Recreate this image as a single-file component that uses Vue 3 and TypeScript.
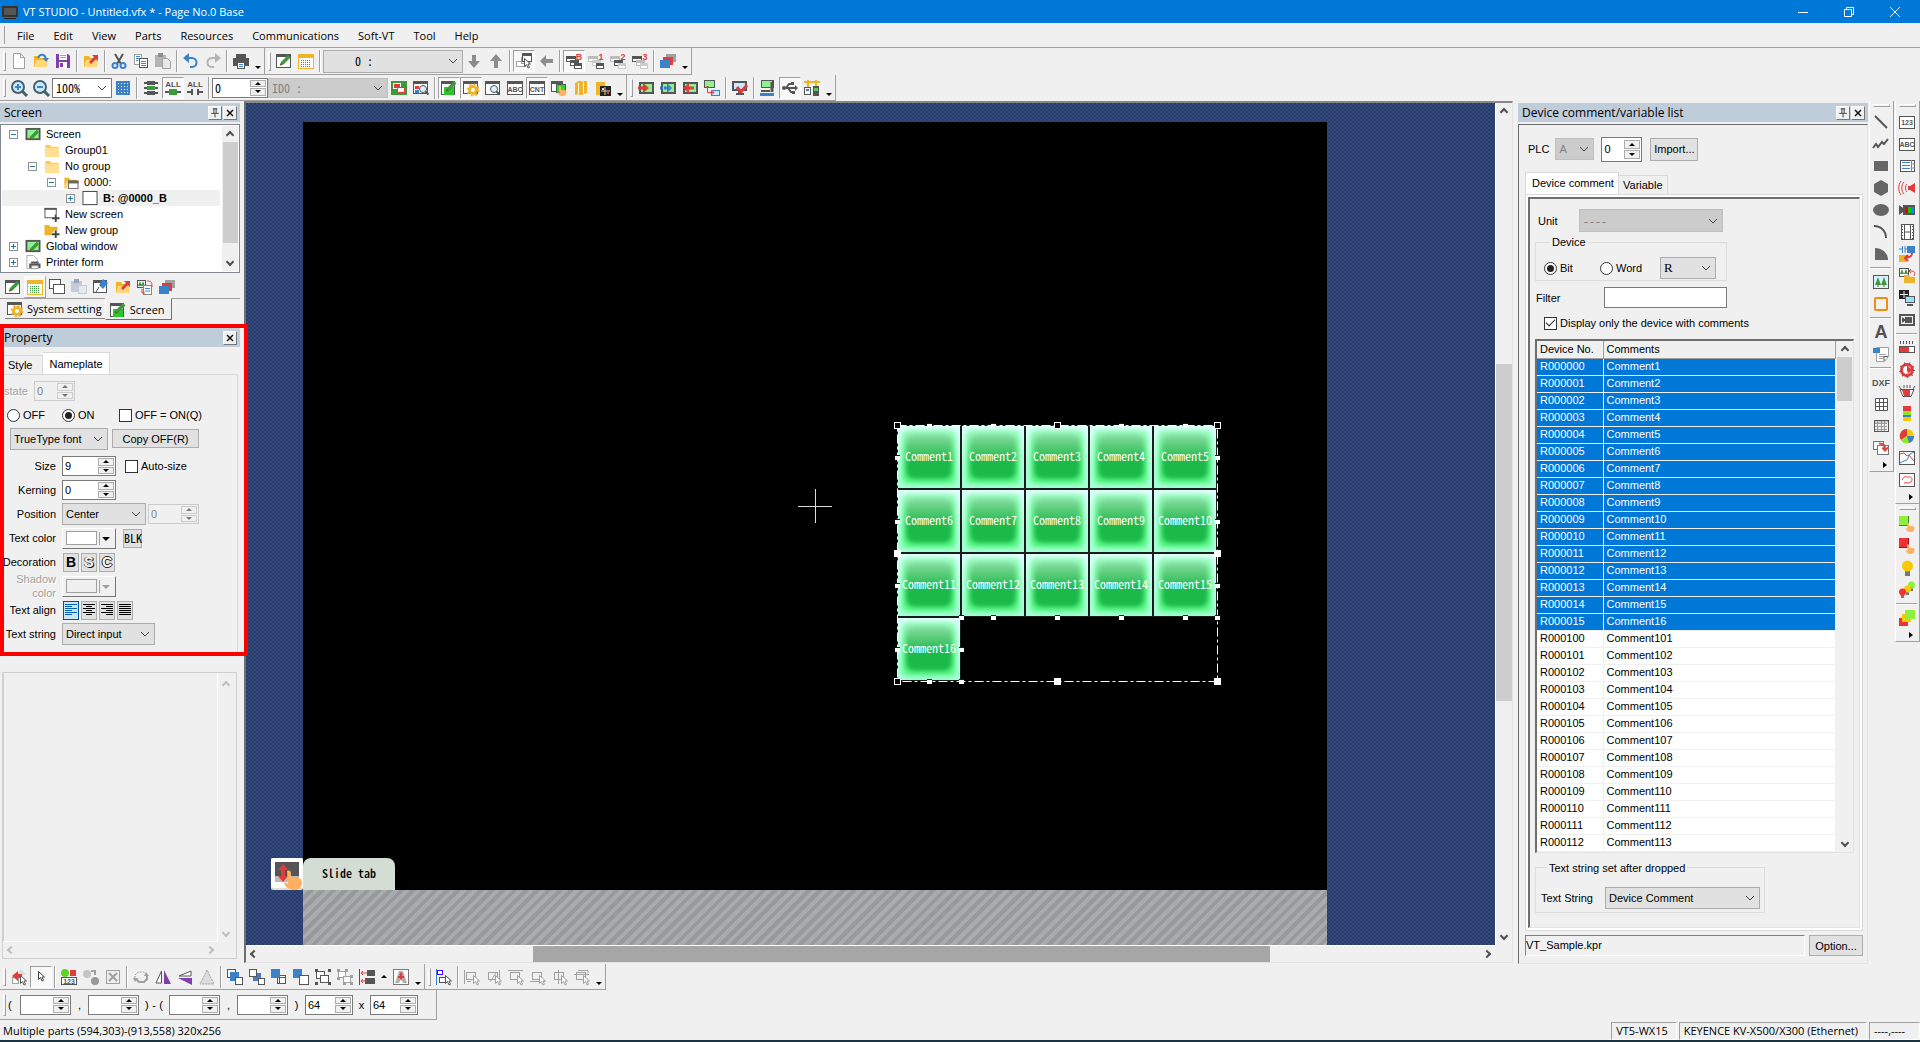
<script setup lang="ts">
import { h, ref } from 'vue'

const K = '#555'
const L = '#a0a0a0'
const R = '#e03c3c'
const B = '#3c82c8'
const G = '#3c9a3c'
const Y = '#f0b428'
const box = (x: number, y: number, w: number, ht: number, s = K, f = '#fff') =>
  `<rect x="${x + 0.5}" y="${y + 0.5}" width="${w - 1}" height="${ht - 1}" fill="${f}" stroke="${s}"/>`
const fill = (x: number, y: number, w: number, ht: number, f: string) =>
  `<rect x="${x}" y="${y}" width="${w}" height="${ht}" fill="${f}"/>`
const line = (d: string, s = K, w = 1, f = 'none') => `<path d="${d}" fill="${f}" stroke="${s}" stroke-width="${w}"/>`
const shape = (d: string, f = K) => `<path d="${d}" fill="${f}"/>`
const label = (t: string, x: number, y: number, size: number, f = K) =>
  `<text x="${x}" y="${y}" font-size="${size}" font-weight="700" fill="${f}" text-anchor="middle" font-family="Liberation Sans, sans-serif">${t}</text>`
const win = (x: number, y: number, w: number, ht: number, s = K) => box(x, y, w, ht, s) + fill(x, y, w, 3, s)
const pencil = (x: number, y: number) =>
  `<g transform="translate(${x} ${y})">${shape('M8 0l2.500 2.500-7 7-3.500 1 1-3.500z', G)}${shape('M0 10.500l.8-2.500 1.700 1.700z', '#6b4a2a')}</g>`
const folder = (f = Y, g = '#ffd77a') => shape('M1 3h5l1 2h7v9H1z', f) + shape('M3 7h12l-1 7H1z', g)
const pointer = (x: number, y: number, s = K) =>
  `<g transform="translate(${x} ${y})">${line('M.5.5v8l2-2 1.500 3.500 1.500-.7L4 6h2.500z', s, 1, '#fff')}</g>`
const finger = (f = '#ffb060') => shape('M8 6.500c1.500-.6 2 .2 2 1.500v2h3c2 0 2.500 1 2.500 2.500 0 2-1.500 3.500-4 3.500-3 0-4.500-2-5-3.500.8-.6 1.500 0 2 .6z', f)
const redArrow = (tail = R) => shape('M6 9l5-5-2-2h6v6l-2-2-5 5z', tail)
const glass = (x: number, y: number) =>
  `<g transform="translate(${x} ${y})"><circle cx="4" cy="4" r="3.500" fill="#d8f0ff" stroke="${K}"/>${line('M6.500 6.500l3 3', K, 2)}</g>`
const zoomGlass = `<circle cx="7" cy="7" r="6" fill="#c8ecff" stroke="#46606e" stroke-width="2"/>` + line('M11 11l5 5', '#46606e', 3)
const cascade = (a: string, b: string, c: string, t: string) =>
  win(0, 3, 10, 6, a) + win(4, 7, 9, 6, b) + win(8, 10, 8, 6, c) + label(t, 13, 7, 9, R)
const layers = fill(6, 1, 10, 8, L) + fill(3, 4, 10, 8, R) + fill(0, 7, 10, 8, B)
const alignIcon = (d: string) => box(2, 3, 10, 8, L, 'none') + line(d, L) + pointer(9, 6, L)
const abc = (t: string) => box(0, 2, 16, 13, K) + label(t, 8, 11, 7)
const lamp = (x: number, y: number, f: string) => fill(x - 1, y + 2, 3, 4, '#777') + `<circle cx="${x + 0.5}" cy="${y}" r="3.500" fill="${f}"/>`
const screenDevice = fill(1, 2, 15, 12, K) + fill(3, 4, 11, 8, '#8ef08e')

const icons: Record<string, string> = {
  'New': line('M2.500.5h7l4 4v11h-11z', L, 1, '#fff') + line('M9.500.5v4h4', L),
  'Open': folder() + line('M5 5c2-5 7-4 8 1', B, 2) + shape('M10 5h6l-3 4z', B),
  'Save': shape('M1 1h12l2 2v12H1z', '#8040a8') + fill(4, 1, 8, 6, '#fff') + fill(5, 2, 6, 1, L) + fill(5, 4, 6, 1, L) + fill(4, 9, 8, 6, '#fff') + fill(5, 10, 3, 4, '#8040a8'),
  'Reference': folder() + redArrow(),
  'Cut': line('M4 1l6 10M12 1L6 11', K, 2) + `<circle cx="4" cy="12.500" r="2.500" fill="none" stroke="${B}" stroke-width="2"/><circle cx="12" cy="12.500" r="2.500" fill="none" stroke="${B}" stroke-width="2"/>`,
  'Copy': box(1, 1, 8, 11, L) + line('M3 3.500h4M3 5.500h4M3 7.500h2', B) + box(6, 5, 9, 10, K) + line('M8 8.500h5M8 10.500h5M8 12.500h5', B),
  'Paste': fill(0, 2, 11, 12, '#b4b4b4') + fill(3, 0, 5, 4, '#909090') + line('M7.500 5.500h5l3 3v7h-8z', L, 1, '#e8e8e8'),
  'Undo': line('M2 5h7c6 0 6 9 0 9H7', B, 2) + shape('M6 0v10L0 5z', B),
  'Redo': line('M14 5H7c-6 0-6 9 0 9h2', '#b4b4b4', 2) + shape('M10 0v10l6-5z', '#b4b4b4'),
  'Print': fill(3, 1, 10, 4, K) + fill(0, 5, 16, 8, K) + box(4, 9, 8, 7, K) + line('M6 11.500h4M6 13.500h4', B),
  'Edit screen': win(0, 1, 15, 14) + pencil(4, 2),
  'Screen list': box(0, 1, 16, 15, Y) + fill(0, 1, 16, 4, Y) + line('M3 7.500h10M3 9.500h10M3 11.500h10M3 13.500h10', G, 1).replace('/>', ' stroke-dasharray="1 1"/>'),
  'Next page': shape('M6 2h4v6h4l-6 7-6-7h4z', '#8c8c8c'),
  'Previous page': shape('M6 15h4V8h4L8 1 2 8h4z', '#8c8c8c'),
  'Select layer': box(0, 8, 10, 6, L) + box(5, 4, 9, 7, L) + win(6, 0, 10, 9, K) + pointer(8, 5),
  'Back': shape('M15 6v4H8v4L2 8l6-6v4z', '#8c8c8c'),
  'Base B': cascade(K, K, K, 'B'),
  'Window 1': cascade('#bbb', '#ccc', K, '1'),
  'Window 2': cascade('#bbb', K, '#ccc', '2'),
  'Window 3': cascade(K, '#bbb', '#ccc', '3'),
  'Layers': layers,
  'Zoom in': zoomGlass + line('M4 7h6M7 4v6', B, 2),
  'Zoom out': zoomGlass + line('M4 7h6', B, 2),
  'Grid': fill(1, 1, 14, 14, B) + line('M3 3.500h12M3 6.500h12M3 9.500h12M3 12.500h12', '#fff').replace('/>', ' stroke-dasharray="1 2"/>'),
  'Parts on': [1, 6, 11].map((y) => fill(1, y + 1, 14, 2, K) + fill(4, y, 8, 4, y === 6 ? G : K)).join(''),
  'All on': label('ALL', 8, 7, 8) + fill(0, 11, 16, 2, K) + fill(4, 9, 8, 6, G),
  'All off': label('ALL', 8, 7, 8) + fill(0, 11, 16, 2, K) + fill(4, 9, 8, 6, '#f0f0f0') + fill(4, 9, 2, 6, K) + fill(10, 9, 2, 6, K),
  'Color': fill(0, 1, 16, 14, G) + box(2, 3, 8, 6, '#fff', R) + box(6, 7, 8, 6, R, '#fff'),
  'Find': win(0, 1, 15, 13) + fill(2, 6, 4, 3, R) + fill(2, 10, 4, 3, B) + glass(6, 5),
  'Edit mode': win(0, 1, 14, 14) + fill(3, 7, 10, 8, '#28c828') + pencil(5, 1),
  'System setting': win(0, 1, 15, 13) + `<circle cx="10" cy="10" r="3.500" fill="#fff" stroke="${Y}" stroke-width="3"/><circle cx="10" cy="10" r="5.500" fill="none" stroke="${Y}" stroke-width="2" stroke-dasharray="2 2.300"/>`,
  'Preview': win(0, 1, 15, 14) + glass(5, 5),
  'ABC display': win(0, 1, 16, 14) + label('ABC', 8, 12, 7),
  'CNT display': win(0, 1, 16, 14) + label('CNT', 8, 12, 7),
  'Touch switch': win(0, 1, 12, 11) + box(5, 4, 10, 9, K, '#28d828') + finger(),
  'Library': shape('M2 3l4-2h3v13H6l-4 1z', Y) + shape('M6 3l5-2h3v12l-5 2H6z', Y) + line('M5.500 3v11M10.500 2v12', '#fff8e0'),
  'Parts library': shape('M1 2h9v13H1z', Y) + fill(5, 6, 11, 10, '#222') + line('M6 11h9M10 7v8', '#e8c8b0') + fill(7, 8, 2, 2, '#ddd') + fill(12, 12, 2, 2, R),
  'Transfer': screenDevice + shape('M0 6.500h5V3l6 5-6 5V9.500H0z', R),
  'Receive': screenDevice + shape('M4 6.500h3V3l5 5-5 5V9.500H4z', B) + line('M0 8h4', B, 3).replace('/>', ' stroke-dasharray="1 1"/>'),
  'Send back': screenDevice + shape('M12 6.500H7V3L1 8l6 5V9.500h5z', R),
  'Compare': fill(0, 0, 11, 8, K) + fill(1, 1, 9, 6, '#8ef08e') + fill(7, 10, 9, 6, B) + fill(8, 11, 7, 4, '#c8ecff') + line('M3.500 6v6.500h6M1.500 8l2-2 2 2M8 10.500l2 2-2 2', R),
  'Monitor check': fill(0, 1, 15, 10, K) + fill(2, 3, 11, 6, '#c8ecff') + fill(4, 13, 8, 2, K) + fill(6, 11, 4, 2, K) + line('M5 7l4 5 6-7', R, 3),
  'Unit setting': fill(1, 0, 13, 8, K) + fill(2, 1, 10, 6, '#8ef08e') + line('M12 2v10', K, 3) + fill(1, 10, 9, 2, K) + fill(0, 13, 14, 3, B),
  'USB': line('M1 8h13M4 8l3-4h3M6 8l3 4h2', K, 2) + `<circle cx="2" cy="8" r="2" fill="${K}"/>` + shape('M13 5l3 3-3 3z') + fill(9, 2, 3, 3, K) + fill(10, 11, 3, 3, K),
  'Network': line('M0 2h16M4 0v7M12 0v7', Y, 2) + box(0, 7, 7, 8) + fill(2, 9, 3, 2, B) + fill(9, 6, 6, 10, K) + fill(10, 8, 4, 3, '#5c5'),
  'Select by shape': shape('M10 0l5 6H6z', '#ddd') + box(1, 8, 7, 7, L) + shape('M1 7l6-5v3h4v4H7v3z', R) + pointer(9, 6),
  'Select': pointer(5, 2, '#444'),
  'Replace parts': `<circle cx="4" cy="4" r="4" fill="#5fd428"/>` + fill(9, 1, 6, 6, R) + box(0, 8, 16, 8, K) + label('123', 8, 15, 7),
  'Swap': `<circle cx="4" cy="5" r="4" fill="#c4c4c4"/><circle cx="12" cy="12" r="4" fill="#999"/>` + line('M8 2h4v4', L, 2),
  'Delete': box(1, 1, 14, 14, L, '#eee') + line('M4 4l8 8M12 4l-8 8', L, 2),
  'Rotate': line('M2 9V6l3-3h6l3 3', L, 1).replace('/>', ' stroke-dasharray="2 1"/>') + line('M14 7v3l-3 3H6l-3-3', L, 2) + shape('M11 7h5l-3-4zM0 9h5l-3 4z', L),
  'Flip horizontal': line('M6.500 2v12H1z', K, 1, '#fff') + shape('M9 1l7 14H9z', '#8040a8'),
  'Flip vertical': line('M14 7H2l12-5z', K, 1, '#fff') + shape('M1 9h14v7z', '#8040a8'),
  'Skew': line('M8 1L1 15h14z', L, 1, '#ddd').replace('/>', ' stroke-dasharray="2 1"/>'),
  'Bring to front': box(0, 0, 9, 9) + fill(3, 3, 9, 9, B) + box(8, 8, 8, 8),
  'Bring forward': fill(4, 4, 8, 8, B) + box(0, 0, 8, 8) + box(9, 9, 7, 7),
  'Send backward': box(6, 6, 9, 9) + fill(0, 0, 9, 9, B) + box(8, 8, 7, 7),
  'Send to back': fill(0, 0, 9, 9, B) + box(6, 6, 10, 10),
  'Group': box(1, 2, 9, 8) + box(5, 6, 9, 8) + [[0, 0], [13, 0], [0, 13], [13, 13]].map(([x, y]) => fill(x, y, 3, 3, K)).join(''),
  'Ungroup': box(1, 2, 8, 7, L) + box(6, 7, 8, 7, L) + [[0, 0], [8, 0], [0, 8], [13, 6], [6, 13], [13, 13]].map(([x, y]) => fill(x, y, 3, 3, L)).join(''),
  'Align left': line('M.5 0v16', K) + fill(8, 1, 8, 6, K) + fill(6, 9, 10, 6, K) + line('M2 4h6M2 12h6M4 2L2 4l2 2M4 10l-2 2 2 2', R),
  'Expand': box(0, 0, 16, 16, '#777') + shape('M6 2h4l4 12h-4l-2-4-2 4H2z', '#b0b0b0') + shape('M8 3l2 3H9v1h2v2H9v1l-1 1-1-1V9H5V7h2V6H6z', R),
  'Snap align': line('M.5 0v16', B) + box(1, 1, 6, 5, '#40f') + box(3, 8, 8, 6, K) + pointer(9, 6),
  'Edge left': line('M.5 1v14', L) + alignIcon('M3 12.500h4'),
  'Edge right': alignIcon('M13.500 1v14M4 13l6-9'),
  'Edge top': alignIcon('M0 1.500h15'),
  'Edge bottom': alignIcon('M0 12.500h15'),
  'Center vertical': alignIcon('M6.500 1v14'),
  'Center horizontal': alignIcon('M0 5.500h15M4 1.500h10v3'),
  'Line': line('M2 2l12 12', K, 2),
  'Polyline': line('M0 12l3-4 2 3 4-5 2 2 4-5', K, 2),
  'Rectangle': fill(1, 3, 14, 10, '#666'),
  'Polygon': shape('M8 0l7 4v8l-7 4-7-4V4z', '#666'),
  'Ellipse': `<ellipse cx="8" cy="8" rx="8" ry="6" fill="#666"/>`,
  'Arc': line('M1 2c7 0 12 5 12 12', K, 2),
  'Sector': shape('M2 2c7 0 13 5 13 12H2z', '#666'),
  'Image': box(0, 1, 16, 14) + fill(1, 2, 14, 12, '#d8f0ff') + shape('M5 3l3 8H2zM11 3l3 8H8z', G) + line('M5 10v3M11 10v3', '#8a5a2a'),
  'Frame': `<rect x="2" y="2" width="12" height="12" rx="1" fill="none" stroke="#f08c14" stroke-width="2"/>`,
  'Text': label('A', 8, 14, 18, '#505050'),
  'Document': line('M3.500 1.500h12v9l-4 5h-8z', L, 1, '#fff') + line('M6 8.500h7M6 10.500h7M6 12.500h4', L) + line('M15 10.500h-4V15', K) + fill(0, 2, 7, 5, B),
  'DXF': label('DXF', 8, 12, 9),
  'Table': line('M2.500 2.500h12v12h-12zM6.500 2v12M10.500 2v12M2 6.500h12M2 10.500h12', K, 1, '#fff'),
  'Data table': fill(1, 2, 14, 3, '#ccc') + line('M4.500 2v12M8.500 2v12M11.500 2v12M2 5.500h12M2 8.500h12M2 11.500h12', '#999') + box(1, 2, 15, 12, K, 'none'),
  'Window part': box(0, 1, 11, 9, G) + box(4, 5, 12, 10, '#777') + line('M6 3.500c5 0 6 2 6 5M9.500 7.500l2.500 3 3-3', R, 2),
  'Numeric': abc('123'), 'Characters': abc('ABC'),
  'List': box(1, 2, 15, 12) + line('M12.500 2v12M12 6h4M12 10h4', '#888') + line('M3 4.500h8M3 7.500h8M3 10.500h8', B),
  'Buzzer': shape('M9 6h2l5-3v10l-5-3H9z', R) + line('M8 4c-2 2-2 6 0 8M5 2c-3 3-3 9 0 12M2 1c-3 4-3 10 0 14', R),
  'Camera': fill(4, 3, 12, 10, K) + shape('M0 3l4 3v4l-4 3z') + fill(6, 5, 3, 6, '#e00') + fill(9, 5, 3, 6, '#0c0') + fill(12, 5, 3, 6, '#08f'),
  'Movie': box(2, 0, 13, 16, K) + line('M5.500 0v16M11.500 0v16M5 8h7', K) + line('M3.500 2v13M13.500 2v13', K).replace(/\/>/g, ' stroke-dasharray="1 2"/>'),
  'Ladder monitor': fill(8, 0, 8, 7, B) + line('M0 3h3M3.500 0v7M6 0v7M6 3h3', B) + fill(0, 9, 8, 7, Y) + line('M13 7c0 4-3 4-7 5M9 9l-3 3 3 3', R, 2),
  'Recipe': box(0, 0, 10, 9) + shape('M3 1l2 5H1zM7 1l2 5H5z', G) + shape('M5 7h5l1 2h5v6H5z', Y) + line('M10 3h3c3 0 3 3 2 5M12 1l-2 2 2 2', R),
  'Remote': fill(0, 0, 10, 9, '#222') + line('M1 4.500h8M5 1v7', '#eee') + fill(6, 6, 10, 7, K) + fill(7, 7, 8, 5, '#9ce0ff') + fill(8, 14, 6, 2, K),
  'Video': box(0, 2, 16, 12, K, K) + fill(2, 4, 12, 8, '#eee') + fill(6, 5, 7, 6, K) + shape('M3 5l3 2v2l-3 2z'),
  'Bar graph': line('M1.500 1v3M4.500 1v3M7.500 1v3M10.500 1v3M13.500 1v3', K) + box(0, 6, 16, 7) + fill(1, 7, 9, 5, R),
  'Meter': `<circle cx="8" cy="8" r="5.500" fill="#fff" stroke="${R}" stroke-width="3"/><circle cx="8" cy="8" r="7" fill="none" stroke="${K}" stroke-width="2" stroke-dasharray="1 4"/>` + shape('M8 8V3l5 5-4 4z', R),
  'Tank': line('M0 2l2 3M5 1v3M8 1v3M11 1v3M16 2l-2 3', K) + line('M1 5.500h14l-3 7H4z', K, 1, '#fff') + shape('M3 6h8v6H5z', R),
  'Stack graph': fill(4, 0, 8, 5, R) + fill(4, 5, 8, 4, '#8ee628') + fill(4, 9, 8, 2, B) + fill(4, 11, 8, 4, '#f8c800'),
  'Pie graph': `<circle cx="8" cy="8" r="7" fill="#f8c800"/>` + shape('M8 8L2 12a7 7 0 0 1 6-11z', R) + shape('M8 8l-6 4a7 7 0 0 0 8 3z', '#8ee628') + shape('M8 8l2 7a7 7 0 0 0 5-7z', B),
  'Trend graph': box(0, 1, 16, 14) + line('M1 4l4-1 3 3 2-1 5 6', R) + line('M1 13l4-2 3-1 3-6 4-2', B),
  'Locus graph': box(0, 1, 16, 14) + line('M3 8c3-6 5-2 6-3 4-1 5 3 3 5s-6 0-7 1', R),
  'Switch green': fill(0, 0, 10, 10, '#8ef03c') + line('M0 9.500h9.500V0', '#3c8a28') + finger(),
  'Switch red': fill(0, 0, 10, 10, '#f03232') + line('M0 9.500h9.500V0', '#901818') + finger(),
  'Lamp': fill(6, 11, 5, 5, '#777') + `<circle cx="8.500" cy="6" r="5.500" fill="#f8c800"/>`,
  'Multi lamp': lamp(12, 3, '#8ef03c') + lamp(8, 7, '#f8c800') + lamp(3, 10, '#f03232'),
  'Parts stack': fill(0, 8, 9, 8, '#f03232') + fill(3, 4, 9, 8, '#f8c800') + fill(6, 0, 10, 9, '#8ef03c'),
  'Screen tree': fill(0, 1, 16, 13, K) + fill(2, 3, 12, 9, '#8ef08e') + pencil(4, 3),
  'Folder': shape('M1 2h5l1 2h8v11H1z', '#f8c850') + fill(1, 5, 14, 10, '#ffdf90'),
  'Folder open': folder() + box(5, 6, 11, 9, '#666') + fill(5, 6, 11, 3, '#666'),
  'Sheet': box(0, 0, 16, 15, '#444'),
  'New screen': box(0, 1, 13, 11, '#555') + fill(0, 1, 13, 2, '#555') + fill(8, 8, 8, 8, '#fff') + line('M12 8v8M8 12h8', '#444', 2),
  'New group': shape('M0 2h5l1 2h8v9H0z', Y) + line('M12 8v8M8 12h8', '#fff', 4) + line('M12 8v8M8 12h8', '#444', 2),
  'Printer form': line('M1.500.5h7l4 4v10h-11z', '#aaa', 1, '#fff') + fill(4, 9, 12, 5, K) + fill(6, 7, 8, 2, K) + box(6, 11, 8, 4, '#999'),
  'Duplicate': box(0, 0, 12, 10) + box(4, 5, 12, 10),
  'Paste screen': fill(0, 2, 11, 11, '#c4cad8') + fill(3, 0, 5, 4, '#98a4bc') + box(7, 6, 9, 9, '#c4cad8', '#e4e8f0'),
  'Rename': win(0, 1, 14, 13) + shape('M10 0l5 4-5 6-4-4z', B) + line('M6 8l-3 5', K),
  'Reuse': box(0, 1, 9, 8) + shape('M3 2l2 5H1zM6 2l2 5H4z', G) + box(6, 6, 9, 10, '#888') + line('M8 9.500h5M8 12h5', B) + line('M10 2c5 0 5 2 5 6M5 10v4h3', R),
  'Slide icon': `<rect width="16" height="16" rx="1" fill="#ddd"/><rect width="16" height="15" rx="1" fill="#fff"/>` + fill(2, 2, 12, 8, K) + fill(2, 9, 12, 3, '#bbb') + shape('M6 3l2.500 3H7v3h1.500L6 12 3.500 9H5V6H3.500z', R) + finger(),
  'Close': line('M4 4l8 8M12 4l-8 8', '#111', 2),
  'Pin': line('M5 2.500h6M6.500 2v6M9.500 2v6M3 8.500h10M8 9v5', '#111'),
  'VT': fill(0, 2, 16, 11, '#333') + fill(2, 4, 12, 7, '#555') + fill(2, 14, 12, 1, '#222'),
}

const Ic = (p: { n: string }) => h('svg', { viewBox: '0 0 16 16', class: 'ic', 'aria-hidden': 'true', innerHTML: icons[p.n] })
Ic.props = ['n']

const Tools = (p: { items: string[] }) =>
  p.items.map((t) => {
    if (t === '|') return h('span', { class: 'sep' })
    if (t === 'v' || t === '^') return h('button', { class: ['more', t === '^' && 'up'], 'aria-label': 'More' })
    const on = t[0] === '*'
    const name = on ? t.slice(1) : t
    return h('button', { class: ['tool', on && 'on'], 'aria-label': name }, [h(Ic, { n: name })])
  })
Tools.props = ['items']

const Spin = (p: { v: string; w: number; name: string; off?: boolean }) =>
  h('span', { class: ['spin', p.off && 'off'], style: { width: p.w + 'px' } }, [
    h('input', { type: 'text', value: p.v, disabled: p.off, 'aria-label': p.name }),
    h('span', { class: 'steps' }, [
      h('button', { class: 'inc', 'aria-label': p.name + ' up', disabled: p.off }),
      h('button', { class: 'dec', 'aria-label': p.name + ' down', disabled: p.off }),
    ]),
  ])
Spin.props = ['v', 'w', 'name', 'off']

const menus = ['File', 'Edit', 'View', 'Parts', 'Resources', 'Communications', 'Soft-VT', 'Tool', 'Help']
const fileTools = ['New', 'Open', 'Save', '|', 'Reference', '|', 'Cut', 'Copy', 'Paste', '|', 'Undo', 'Redo', '|', 'Print', 'v']
const pageTools = ['Next page', 'Previous page', '|', '*Select layer', 'Back', '|', '*Base B', 'Window 1', 'Window 2', 'Window 3', '|', 'Layers', 'v']
const viewTools = ['Color', 'Find', '|', '*Edit mode', '*System setting', 'Preview', 'ABC display', '*CNT display', 'Touch switch', 'Library', 'Parts library', 'v']
const commTools = ['Transfer', 'Receive', 'Send back', 'Compare', '|', 'Monitor check', '|', 'Unit setting', '*USB', 'Network', 'v']
const arrangeTools = ['Select by shape', '*Select', '|', 'Replace parts', 'Swap', 'Delete', '|', 'Rotate', 'Flip horizontal', 'Flip vertical', 'Skew', '|', 'Bring to front', 'Bring forward', 'Send backward', 'Send to back', 'Group', 'Ungroup', 'Align left', '^', 'Expand', 'v']
const snapTools = ['Snap align', '|', 'Edge left', 'Edge right', 'Edge top', 'Edge bottom', 'Center vertical', 'Center horizontal', 'v']
const treeTools = ['Edit screen', '*Screen list', 'Duplicate', 'Paste screen', 'Rename', 'Reference', 'Reuse', 'Layers']
const drawTools = ['Line', 'Polyline', 'Rectangle', 'Polygon', 'Ellipse', 'Arc', 'Sector', '|', 'Image', 'Frame', '|', 'Text', 'Document', '|', 'DXF', 'Table', 'Data table', 'Window part', 'v']
const partTools = ['Numeric', 'Characters', 'List', 'Buzzer', 'Camera', 'Movie', 'Ladder monitor', 'Recipe', 'Remote', 'Video', '|', 'Bar graph', 'Meter', 'Tank', 'Stack graph', 'Pie graph', 'Trend graph', 'Locus graph', 'v']
const switchTools = ['Switch green', 'Switch red', 'Lamp', 'Multi lamp', '|', 'Parts stack', 'v']

interface Node { level: number; mark: string; icon: string; text: string; sel?: boolean }
const tree: Node[] = [
  { level: 0, mark: '-', icon: 'Screen tree', text: 'Screen' },
  { level: 1, mark: '', icon: 'Folder', text: 'Group01' },
  { level: 1, mark: '-', icon: 'Folder', text: 'No group' },
  { level: 2, mark: '-', icon: 'Folder open', text: '0000:' },
  { level: 3, mark: '+', icon: 'Sheet', text: 'B: @0000_B', sel: true },
  { level: 1, mark: '', icon: 'New screen', text: 'New screen' },
  { level: 1, mark: '', icon: 'New group', text: 'New group' },
  { level: 0, mark: '+', icon: 'Screen tree', text: 'Global window' },
  { level: 0, mark: '+', icon: 'Printer form', text: 'Printer form' },
]

const rows = [
  ...Array.from({ length: 16 }, (_, i) => ({ no: 'R0000' + String(i).padStart(2, '0'), text: 'Comment' + (i + 1), sel: true })),
  ...Array.from({ length: 13 }, (_, i) => ({ no: 'R0001' + String(i).padStart(2, '0'), text: 'Comment' + (i + 101), sel: false })),
]

// Selection handles, in screen pixels from the corner of the selected group
const hollow = [[0, 0], [160, 0], [320, 0], [0, 256]]
const solid = [[160, 256], [320, 256], [0, 128], [320, 128]]
const small = [[32, 0], [96, 0], [224, 0], [288, 0], [0, 32], [0, 96], [0, 160], [0, 224], [320, 32], [320, 96], [320, 160],
  [64, 192], [96, 192], [160, 192], [224, 192], [288, 192], [320, 192], [64, 224], [32, 256], [64, 256]]

const state = ref('on')
const device = ref('bit')
const onlyComments = ref(true)
</script>

<template>
  <div class="app">
    <header class="title">
      <Ic n="VT" />
      <span class="name">VT STUDIO - Untitled.vfx * - Page No.0 Base</span>
      <button aria-label="Minimize"><svg viewBox="0 0 10 10"><path d="M0 5.500h10" /></svg></button>
      <button aria-label="Restore"><svg viewBox="0 0 10 10"><path d="M.5 2.500h7v7h-7zM2.500 2V.5h7v7H8" /></svg></button>
      <button aria-label="Close"><svg viewBox="0 0 10 10"><path d="M0 0l10 10M10 0L0 10" /></svg></button>
    </header>
    <nav class="menu"><button v-for="m in menus" :key="m">{{ m }}</button></nav>
    <div class="strip">
      <div class="bar"><Tools :items="fileTools" /></div>
      <div class="bar">
        <Tools :items="['Edit screen', 'Screen list', '|']" />
        <select class="page mono" aria-label="Page"><option>0 :</option></select>
        <Tools :items="pageTools" />
      </div>
    </div>
    <div class="strip second">
      <div class="bar">
        <Tools :items="['Zoom in', 'Zoom out']" />
        <select class="zoom mono" aria-label="Zoom"><option>100%</option></select>
        <Tools :items="['Grid', '|', 'Parts on', '*All on', 'All off', '|']" />
        <Spin class="mono" v="0" :w="56" name="State" />
        <select class="ids mono" disabled aria-label="ID"><option>ID0 :</option></select>
        <Tools :items="viewTools" />
      </div>
      <div class="bar"><Tools :items="commTools" /></div>
    </div>

    <main class="work">
      <aside class="dock-left">
        <h2 class="head"><span>Screen</span><button aria-label="Pin"><Ic n="Pin" /></button><button aria-label="Close"><Ic n="Close" /></button></h2>
        <div class="tree">
          <ul>
            <li v-for="n in tree" :key="n.text" :class="{ sel: n.sel }">
              <i v-for="k in n.level" :key="k" class="indent"></i>
              <span class="mark" :class="{ box: n.mark, plus: n.mark === '+' }"></span>
              <Ic :n="n.icon" />{{ n.text }}
            </li>
          </ul>
          <div class="vbar"><i class="chev"></i><b class="thumb"></b><i class="chev to-down"></i></div>
        </div>
        <div class="tree-tools"><Tools :items="treeTools" /></div>
        <div class="dock-tabs">
          <button><Ic n="System setting" />System setting</button>
          <button class="cur"><Ic n="Edit mode" />Screen</button>
        </div>

        <section class="prop">
          <h2 class="head"><span>Property</span><button aria-label="Close property"><Ic n="Close" /></button></h2>
          <div class="tabs"><button>Style</button><button class="cur">Nameplate</button></div>
          <form class="form" @submit.prevent>
            <div class="row"><span class="state etch">state</span><Spin v="0" :w="41" name="state" :off="true" /></div>
            <div class="row radios">
              <label><input v-model="state" type="radio" name="state" value="off" />OFF</label>
              <label><input v-model="state" type="radio" name="state" value="on" />ON</label>
              <label><input type="checkbox" />OFF = ON(Q)</label>
            </div>
            <div class="row fonts">
              <select aria-label="Font type"><option>TrueType font</option></select>
              <button class="push">Copy OFF(R)</button>
            </div>
            <div class="row"><span class="lab">Size</span><Spin v="9" :w="54" name="Size" /><label class="auto"><input type="checkbox" />Auto-size</label></div>
            <div class="row"><span class="lab">Kerning</span><Spin v="0" :w="54" name="Kerning" /></div>
            <div class="row"><label class="lab" for="pos">Position</label><select id="pos" class="pos"><option>Center</option></select><Spin v="0" :w="51" name="Position offset" :off="true" /></div>
            <div class="row"><span class="lab">Text color</span><button class="color" aria-label="Text color"><i></i></button><button class="push mono blk">BLK</button></div>
            <div class="row"><span class="lab">Decoration</span><div class="set"><button class="deco">B</button><button class="deco shadow">S</button><button class="deco outline">C</button></div></div>
            <div class="row"><span class="lab etch">Shadow color</span><button class="color" disabled aria-label="Shadow color"><i></i></button></div>
            <div class="row"><span class="lab">Text align</span>
              <div class="set">
                <button class="deco on" aria-label="Left"><svg viewBox="0 0 12 12"><path d="M0 .5h12M0 2.500h7M0 4.500h12M0 6.500h7M0 8.500h12M0 10.500h7" /></svg></button>
                <button class="deco" aria-label="Center"><svg viewBox="0 0 12 12"><path d="M0 .5h12M3 2.500h6M0 4.500h12M3 6.500h6M0 8.500h12M3 10.500h6" /></svg></button>
                <button class="deco" aria-label="Right"><svg viewBox="0 0 12 12"><path d="M0 .5h12M5 2.500h7M0 4.500h12M5 6.500h7M0 8.500h12M5 10.500h7" /></svg></button>
                <button class="deco" aria-label="Justify"><svg viewBox="0 0 12 12"><path d="M0 .5h12M0 2.500h12M0 4.500h12M0 6.500h12M0 8.500h12M0 10.500h12" /></svg></button>
              </div>
            </div>
            <div class="row"><label class="lab" for="str">Text string</label><select id="str" class="str"><option>Direct input</option></select></div>
          </form>
        </section>
        <div class="blank">
          <div class="field"></div>
          <div class="vbar pale"><i class="chev"></i><i class="chev to-down"></i></div>
          <div class="hbar pale"><i class="chev to-left"></i><i class="chev to-right"></i></div>
        </div>
      </aside>

      <section class="canvas">
        <div class="view">
          <div class="board">
            <div class="screen">
              <i class="cross"></i>
              <div class="grid mono">
                <div v-for="i in 16" :key="i" class="tile"><span>Comment{{ i }}</span></div>
                <svg class="marks" viewBox="-4 -4 328 264">
                  <rect x="0.5" y="0.5" width="320" height="256" class="dash" />
                  <rect v-for="(p, i) in small" :key="'s' + i" :x="p[0] - 2" :y="p[1] - 2" width="5" height="5" class="shade" />
                  <rect v-for="(p, i) in small" :key="'w' + i" :x="p[0] - 2" :y="p[1] - 1" width="5" height="4" class="solid" />
                  <rect v-for="(p, i) in solid" :key="'f' + i" :x="p[0] - 3" :y="p[1] - 3" width="7" height="7" class="solid" />
                  <rect v-for="(p, i) in hollow" :key="'h' + i" :x="p[0] - 2.5" :y="p[1] - 2.5" width="6" height="6" class="hollow" />
                </svg>
              </div>
              <div class="slide mono"><Ic n="Slide icon" /><span>Slide tab</span></div>
            </div>
            <div class="stripes"></div>
          </div>
        </div>
        <div class="vbar"><i class="chev"></i><b class="thumb"></b><i class="chev to-down"></i></div>
        <div class="hbar"><i class="chev to-left"></i><b class="thumb"></b><i class="chev to-right"></i></div>
      </section>

      <aside class="dock-right">
        <h2 class="head"><span>Device comment/variable list</span><button aria-label="Pin list"><Ic n="Pin" /></button><button aria-label="Close list"><Ic n="Close" /></button></h2>
        <div class="pane">
          <div class="plc">
            <label for="plc">PLC</label>
            <select id="plc" disabled><option>A</option></select>
            <Spin class="tall" v="0" :w="41" name="PLC number" />
            <button class="push">Import...</button>
          </div>
          <div class="tabs"><button class="cur">Device comment</button><button>Variable</button></div>
          <div class="page-box">
            <div class="sunken">
              <div class="unit"><label for="unit">Unit</label><select id="unit" class="mono" disabled><option>----</option></select></div>
              <fieldset class="device">
                <legend>Device</legend>
                <label><input v-model="device" type="radio" name="device" value="bit" />Bit</label>
                <label><input v-model="device" type="radio" name="device" value="word" />Word</label>
                <select aria-label="Device type" class="serif"><option>R</option></select>
              </fieldset>
              <div class="filter"><label for="filter">Filter</label><input id="filter" type="text" /></div>
              <label class="only"><input v-model="onlyComments" type="checkbox" />Display only the device with comments</label>
              <div class="list">
                <table>
                  <thead><tr><th>Device No.</th><th>Comments</th></tr></thead>
                  <tbody>
                    <tr v-for="r in rows" :key="r.no" :class="{ sel: r.sel }"><td>{{ r.no }}</td><td>{{ r.text }}</td></tr>
                  </tbody>
                </table>
                <div class="vbar"><i class="chev"></i><b class="thumb"></b><i class="chev to-down"></i></div>
              </div>
              <fieldset class="dropped">
                <legend>Text string set after dropped</legend>
                <label for="ts">Text String</label>
                <select id="ts"><option>Device Comment</option></select>
              </fieldset>
            </div>
          </div>
          <div class="file"><span>VT_Sample.kpr</span><button class="push">Option...</button></div>
        </div>
      </aside>

      <div class="rail"><div class="bar vert"><Tools :items="drawTools" /></div></div>
      <div class="rail">
        <div class="bar vert"><Tools :items="partTools" /></div>
        <div class="bar vert"><Tools :items="switchTools" /></div>
      </div>
    </main>

    <div class="strip low">
      <div class="bar"><Tools :items="arrangeTools" /></div>
      <div class="bar"><Tools :items="snapTools" /></div>
    </div>
    <div class="coords">
      <div class="bar">
        <span class="open">(</span><Spin v="" :w="51" name="Left" /><span class="mark-txt">,</span><Spin v="" :w="51" name="Top" /><span class="mid"><b>)</b><b>-</b><b>(</b></span>
        <Spin v="" :w="51" name="Right" /><span class="mark-txt">,</span><Spin v="" :w="51" name="Bottom" /><span class="mark-txt">)</span>
        <Spin v="64" :w="48" name="Width" /><span class="mark-txt">x</span><Spin v="64" :w="48" name="Height" />
      </div>
    </div>
    <footer class="status">
      <span class="msg">Multiple parts (594,303)-(913,558) 320x256</span>
      <span class="cell">VT5-WX15</span><span class="cell">KEYENCE KV-X500/X300 (Ethernet)</span><span class="cell last">----,----</span>
    </footer>
  </div>
</template>

<style>
html, body { background: #f0f0f0; }
</style>

<style scoped>
.app { display: flex; flex-direction: column; min-height: 100vh; background: #f0f0f0; color: #000; font: 11px/16px "Liberation Sans", sans-serif; overflow: hidden; }
.app, .app :deep(*) { box-sizing: border-box; }
.app :deep(button), .app :deep(input), select { margin: 0; padding: 0; font: inherit; color: inherit; border: 0; background: none; border-radius: 0; white-space: nowrap; }
.app :deep(.mono), .app :deep(.mono) input { font-family: "Noto Sans CJK JP", monospace; font-size: 12px; font-feature-settings: "hwid"; }
.app :deep(.ic) { width: 16px; height: 16px; flex: none; display: block; overflow: visible; }

.title { display: flex; align-items: center; height: 23px; background: #0078d7; color: #fff; font: 12px/22px "Open Sans", sans-serif; padding: 0 2px; }
.title .name { flex: 1; padding-left: 5px; font-size: 11px; }
.title button { width: 46px; height: 22px; display: flex; justify-content: center; align-items: center; }
.title button svg { width: 10px; height: 10px; fill: none; stroke: #fff; }

.menu { display: flex; gap: 1px; height: 25px; padding-left: 8px; border-bottom: 1px solid #a0a0a0; font: 11px/24px "Open Sans", sans-serif; position: relative; }
.menu button { padding: 1px 9px 0; }
.menu::before { content: ""; position: absolute; left: 4px; top: 3px; bottom: 3px; width: 1px; background: #a0a0a0; }

.strip { display: flex; height: 27px; flex: none; }
.bar { display: flex; align-items: center; padding-left: 8px; position: relative; border-right: 1px solid #a0a0a0; border-bottom: 1px solid #a0a0a0; height: 27px; flex: none; }
.bar::before { content: ""; position: absolute; left: 3px; top: 4px; bottom: 3px; width: 1px; border: 1px solid #a0a0a0; border-left-color: #fff; border-top-color: #fff; }
.second, .second .bar { height: 26px; }
.app :deep(.tool) { width: 22px; height: 22px; display: flex; align-items: center; justify-content: center; flex: none; border: 1px solid transparent; }
.app :deep(.tool.on) { background: #f8f8f8; border-color: #a0a0a0 #fff #fff #a0a0a0; }
.app :deep(.sep) { width: 6px; height: 22px; flex: none; display: flex; justify-content: center; }
.app :deep(.sep)::before { content: ""; width: 2px; height: 22px; background: linear-gradient(90deg, #a0a0a0 50%, #fff 50%); }
.app :deep(.more) { width: 12px; height: 22px; flex: none; position: relative; }
.app :deep(.more)::before { content: ""; position: absolute; left: 3px; bottom: 3px; border: 3px solid transparent; border-top-color: #000; border-bottom: 0; }
.app :deep(.more.up)::before { bottom: 10px; border: 3px solid transparent; border-bottom-color: #000; border-top: 0; }

select { appearance: none; height: 22px; padding: 0 18px 0 3px; border: 1px solid #adadad; background: #e1e1e1 url("data:image/svg+xml,%3Csvg xmlns='http://www.w3.org/2000/svg' width='10' height='6'%3E%3Cpath d='M1 1l4 4 4-4' fill='none' stroke='%23444'/%3E%3C/svg%3E") no-repeat right 4px center; }
select:disabled { background-color: #ccc; border-color: #bfbfbf; color: #838383; opacity: 1; }
.page { width: 140px; height: 23px; padding-left: 31px; }
.zoom { width: 60px; height: 20px; background-color: #fff; border-color: #7a7a7a; }
.ids { width: 120px; height: 20px; }

.app :deep(.spin) { display: flex; height: 20px; flex: none; border: 1px solid #7a7a7a; background: #fff; }
.app :deep(.spin input) { flex: 1; min-width: 0; width: 0; padding-left: 2px; outline: none; }
.app :deep(.steps) { width: 16px; display: flex; flex-direction: column; margin: 1px; gap: 1px; flex: none; }
.app :deep(.steps button) { flex: 1; border: 1px solid #adadad; background: #f0f0f0; display: flex; align-items: center; justify-content: center; }
.app :deep(.steps button)::before { content: ""; border: 3px solid transparent; border-bottom-color: #000; border-top: 0; }
.app :deep(.steps .dec)::before { border: 3px solid transparent; border-top-color: #000; border-bottom: 0; }
.app :deep(.spin.off) { background: #f0f0f0; border-color: #ccc; color: #838383; }
.app :deep(.spin.off button) { border-color: #ccc; }
.app :deep(.spin.off .inc)::before { border-bottom-color: #777; }
.app :deep(.spin.off .dec)::before { border-top-color: #777; }
.app :deep(.spin.tall) { height: 25px; padding: 1px 0; }

.push { height: 19px; border: 1px solid #adadad !important; background: #e1e1e1 !important; }
input[type="radio"], input[type="checkbox"] { appearance: none; width: 13px; height: 13px; border: 1px solid #333 !important; background: #fff !important; flex: none; display: grid; place-items: center; }
input[type="radio"] { border-radius: 50% !important; }
input[type="radio"]:checked::before { content: ""; width: 7px; height: 7px; border-radius: 50%; background: #222; }
input[type="checkbox"]:checked::before { content: ""; width: 8px; height: 4px; margin-top: -3px; border: solid #222; border-width: 0 0 1px 1px; transform: rotate(-45deg); }
label { white-space: nowrap; }
label:has(input) { display: flex; align-items: center; gap: 3px; }

.work { flex: 1; display: flex; align-items: stretch; }
.head { display: flex; align-items: center; gap: 1px; margin: 0; height: 19px; padding: 0 3px 0 4px; background: #bfcddb; font: 12px/18px "Open Sans", sans-serif; flex: none; }
.head span { flex: 1; }
.head button { width: 14px; height: 14px; background: #f0f0f0 !important; border: 1px solid !important; border-color: #fff #777 #777 #fff !important; display: grid; place-items: center; }
.head .ic { width: 12px !important; height: 12px !important; }

.dock-left { width: 240px; margin-right: 4px; padding-top: 2px; display: flex; flex-direction: column; flex: none; }
.tree { display: flex; height: 149px; margin-top: 2px; border: 1px solid #828790; background: #fff; padding: 1px; flex: none; }
.tree ul { flex: 1; margin: 0; padding: 0; list-style: none; }
.tree li { display: flex; align-items: center; height: 16px; padding-left: 7px; white-space: nowrap; }
.tree li.sel { background: #f0f0f0; font-weight: 700; margin-right: 2px; }
.tree li .ic { margin: 0 5px 0 6px; height: 15px !important; }
.indent { width: 19px; }
.mark { width: 10px; height: 9px; position: relative; }
.mark.box { width: 9px; margin-right: 1px; border: 1px solid #919191; background: linear-gradient(#27a, #27a) center / 5px 1px no-repeat, #fff; }
.mark.plus { background: linear-gradient(#27a, #27a) center / 5px 1px no-repeat, linear-gradient(#27a, #27a) center / 1px 5px no-repeat, #fff; }
.vbar { width: 16px; display: flex; flex-direction: column; align-items: center; background: #f0f0f0; position: relative; flex: none; }
.hbar { height: 16px; display: flex; align-items: center; background: #f0f0f0; }
.chev { width: 16px; height: 16px; display: grid; place-items: center; flex: none; }
.chev::before { content: ""; width: 4px; height: 4px; margin-top: 2px; border: solid #505050; border-width: 2px 0 0 2px; transform: rotate(45deg); }
.chev.to-down { margin-top: auto; }
.chev.to-right { margin-left: auto; }
.chev.to-down::before { transform: rotate(225deg); margin: 0 0 2px; }
.chev.to-left::before { transform: rotate(-45deg); margin: 0; }
.chev.to-right::before { transform: rotate(135deg); margin: 0; }
.pale .chev::before { border-color: #bfbfbf; }
.thumb { background: #cdcdcd; display: block; }
.tree .thumb { width: 15px; height: 101px; }
.tree-tools { display: flex; height: 25px; padding: 2px 0 0 2px; align-items: center; flex: none; }
.tree-tools :deep(.tool.on) { border-color: #fff #a0a0a0 #a0a0a0 #fff; }
.dock-tabs { display: flex; height: 26px; padding-left: 5px; border-top: 1px solid #a0a0a0; align-items: flex-start; font: 11px/18px "Open Sans", sans-serif; flex: none; }
.dock-tabs button { display: flex; align-items: center; gap: 4px; height: 20px; padding: 1px 3px 0 2px; border-bottom: 1px solid #808080 !important; }
.dock-tabs .cur { height: 22px; margin-top: -1px; padding: 1px 6px 0 4px; background: #f0f0f0 !important; border: 1px solid !important; border-color: #f0f0f0 #707070 #707070 #fff !important; }

.prop { position: relative; height: 332px; padding: 4px 0 0 4px; flex: none; }
.prop::after { content: ""; box-sizing: border-box; position: absolute; left: 0; top: 0; bottom: 0; width: 248px; border: 4px solid #f00; pointer-events: none; z-index: 2; }
.prop .head { padding-left: 0; }
.tabs { display: flex; align-items: flex-end; }
.tabs button { height: 19px; padding: 0 10px 0 4px; border: 1px solid #d9d9d9 !important; border-width: 1px 1px 0 0 !important; }
.tabs .cur { height: 22px; padding: 0 7px; background: #fff !important; }
.prop .tabs { height: 27px; }
.prop .tabs .cur { padding: 0 6px; }
.form { width: 234px; height: 282px; padding: 4px 0 0; border: 1px solid #d9d9d9; border-left: 0; border-bottom: 0; }
.row { display: flex; align-items: center; height: 24px; }
.lab { width: 52px; margin-right: 6px; text-align: right; white-space: nowrap; display: flex; justify-content: flex-end; flex: none; }
.etch { color: #a0a0a0; text-shadow: 1px 1px #fff; }
.state { width: 30px; }
.row .lab.etch { white-space: normal; line-height: 14px; text-align: right; display: block; }
.radios label:nth-child(1) { width: 55px; padding-left: 3px; }
.radios label:nth-child(2) { width: 60px; padding-left: 3px; }
.fonts { gap: 4px; margin-bottom: 4px; padding-left: 6px; height: 23px; }
.fonts select { width: 98px; }
.fonts .push { width: 87px; }
.auto { margin-left: 9px; }
.pos { width: 84px; margin-right: 2px; }
.str { width: 93px; }
.color { width: 54px; height: 21px; border: 1px solid !important; border-color: #fff #777 #777 #fff !important; display: flex; align-items: center; padding-left: 3px !important; position: relative; }
.color i { width: 31px; height: 14px; border: 1px solid #a0a0a0; background: #fff; }
.color::before { content: ""; position: absolute; left: 36px; top: 3px; width: 1px; height: 13px; background: #a0a0a0; }
.color::after { content: ""; position: absolute; left: 39px; top: 8px; border: 4px solid transparent; border-top-color: #000; border-bottom: 0; }
.color:disabled i { background: #f0f0f0; }
.color:disabled::after { border-top-color: #a0a0a0; }
.blk { width: 19px; margin-left: 7px !important; line-height: 16px !important; }
.set { display: flex; gap: 2px; padding-left: 1px; }
.deco { width: 16px; height: 19px; border: 1px solid #adadad !important; background: #e1e1e1 !important; font-weight: 700 !important; font-size: 14px !important; display: grid; place-items: center; }
.deco svg { width: 12px; height: 12px; stroke: #000; }
.deco.on { background: #cce4f7 !important; border-color: #005499 !important; }
.deco.on svg { stroke: #0060b8; }
.deco.shadow { color: #fff !important; text-shadow: 1px 1px #111, 1px 0 #333, -1px 0 #555; }
.deco.outline { color: #fff !important; text-shadow: 1px 0 #222, -1px 0 #222, 0 1px #222, 0 -1px #222; }

.blank { flex: 1; display: grid; grid-template: 1fr 16px / 1fr 18px; width: 235px; margin: 16px 0 5px 2px; border: 1px solid #d0d0d0; }
.field { border: 1px solid; border-color: #f0f0f0 #fff #fff #d0d0d0; }
.blank .vbar { padding-top: 3px; }
.blank .hbar { grid-column: 1; }

.canvas { flex: 1; min-width: 0; display: grid; grid-template: 1fr 17px / 1fr 17px; border: 2px solid #6e6e6e; border-right: 1px solid #e3e3e3; border-bottom: 1px solid #e3e3e3; margin-bottom: 1px; border-top-color: #888; }
.view { min-width: 0; overflow: hidden; padding: 19px 57px 0; background: repeating-conic-gradient(#3a4a70 0 25%, #203a74 0 50%) 0 0 / 4px 4px; display: flex; }
.board { width: 1024px; flex: none; display: flex; flex-direction: column; }
.screen { height: 768px; background: #000; position: relative; flex: none; }
.stripes { flex: 1; background: repeating-linear-gradient(135deg, #a9abaf 0 4px, #98999d 4px 8px); }
.cross { position: absolute; left: 495px; top: 367px; width: 34px; height: 34px; background: linear-gradient(#ddd, #ddd) center / 34px 1px no-repeat, linear-gradient(#ddd, #ddd) center / 1px 34px no-repeat; }
.grid { position: absolute; left: 594px; top: 303px; display: grid; grid-template-columns: repeat(5, 64px); grid-auto-rows: 64px; color: #fff; }
.tile { position: relative; display: flex; align-items: center; justify-content: center; border: 1px solid #1c1c1c; background: linear-gradient(#dcfffa, #a4ffd4); white-space: nowrap; overflow: hidden; padding-bottom: 2px; }
.tile::before { content: ""; position: absolute; inset: 4px; border-radius: 6px; background: linear-gradient(#9cf8c0, #58f888 50%); filter: blur(2px); }
.tile::after { content: ""; position: absolute; inset: 9px 8px; border-radius: 8px; background: linear-gradient(#86dca0, #1cb848 58%); filter: blur(2px); }
.tile span { position: relative; z-index: 1; }
.marks { position: absolute; left: -4px; top: -4px; width: 328px; height: 264px; z-index: 2; }
.dash { fill: none; stroke: #fff; stroke-dasharray: 9 3 3 3; }
.shade { fill: #301018; }
.solid { fill: #fff; }
.hollow { fill: #000; stroke: #fff; }
.slide { position: absolute; left: -32px; bottom: 0; display: flex; color: #000; font-weight: 500; }
.slide .ic { width: 32px !important; height: 32px !important; }
.slide span { width: 92px; height: 32px; line-height: 30px; text-align: center; background: #d3ddd3; border-radius: 8px 8px 0 0; }
.canvas .vbar { border-left: 1px solid #fff; width: 17px; }
.canvas .vbar .thumb { position: absolute; left: 0; right: 0; top: 31%; bottom: 29%; }
.canvas .hbar { position: relative; border-top: 1px solid #fff; height: 17px; }
.canvas .hbar .thumb { position: absolute; left: 23%; width: 59%; top: 0; bottom: 0; background: #a6a6a6; }

.dock-right { width: 350px; margin: 2px 0 0 5px; display: flex; flex-direction: column; flex: none; }
.pane { flex: 1; display: flex; flex-direction: column; margin-top: 2px; padding: 0 4px 7px 6px; border: 1px solid #6e6e6e; border-right-color: #e3e3e3; border-bottom-color: #e3e3e3; }
.plc { display: flex; align-items: center; height: 47px; padding: 1px 0 0 3px; }
.plc select { width: 39px; margin: 0 7px 0 6px; }
.plc .push { width: 48px; height: 23px; margin-left: 8px; }
.pane .tabs button { padding: 0 4px; }
.pane .tabs .cur { width: 94px; border-left-width: 1px !important; padding: 0 5px 1px 6px; }
.page-box { flex: 1; display: flex; padding: 2px; border: 1px solid #d9d9d9; background: #fff; }
.sunken { flex: 1; background: #f0f0f0; border: 1px solid #e3e3e3; border-top: 2px solid #6e6e6e; border-left: 2px solid #6e6e6e; padding: 10px 4px 12px 5px; display: flex; flex-direction: column; align-items: flex-start; }
.unit { display: flex; height: 23px; align-items: center; padding-left: 3px; }
.unit label { width: 41px; }
.unit select { width: 144px; height: 23px; }
fieldset { margin: 0; padding: 0; border: 1px solid #dcdcdc; display: flex; align-items: center; min-width: 0; }
legend { margin-left: 6px; padding: 0 2px; line-height: 14px; }
.device { width: 192px; height: 46px; margin-top: 3px; padding: 8px 10px 0 8px; }
.device label { width: 56px; }
.device select { width: 56px; margin-left: auto; }
.serif { font-family: "Liberation Serif", serif !important; font-size: 13px !important; }
.filter { display: flex; align-items: center; height: 21px; margin-top: 6px; padding-left: 1px; }
.filter label { width: 68px; }
.filter input { width: 123px; height: 21px; border: 1px solid #7a7a7a !important; background: #fff !important; }
.only { margin: 7px 0 8px 9px; height: 16px; }
.list { display: flex; width: 319px; background: #fff; border: 1px solid #e3e3e3; border-left: 2px solid #6e6e6e; border-top: 2px solid #6e6e6e; }
table { flex: 1; border-collapse: collapse; table-layout: fixed; }
th, td { height: 17px; padding: 0 3px; text-align: left; font-weight: 400; line-height: 15px; border: 1px solid #f0f0f0; border-width: 0 1px 1px 0; }
th { background: #f0f0f0; border-color: #a0a0a0; }
th:first-child { width: 66px; }
tr.sel { background: #0078d7; color: #fff; }
.list .vbar { width: 17px; }
.list .thumb { width: 15px; height: 44px; }
.dropped { width: 230px; height: 52px; margin-top: 8px; padding: 12px 4px 0 5px; }
.dropped select { width: 155px; margin-left: auto; }
.file { display: flex; gap: 4px; margin-top: 4px; height: 21px; }
.file span { flex: 1; border: 1px solid #808080; border-right-color: #fff; border-bottom-color: #fff; line-height: 19px; }
.file .push { width: 54px; height: 21px; }

.rail { width: 25px; margin-left: 1px; flex: none; }
.bar.vert { width: 25px; height: auto; flex-direction: column; padding: 10px 2px 0 0; border-left: 1px solid #fff; }
.bar.vert + .bar.vert { padding-top: 9px; }
.bar.vert::before { left: 3px; right: 3px; width: auto; top: 3px; bottom: auto; height: 1px; }
.bar.vert :deep(.sep) { width: 22px; height: 6px; align-items: center; }
.bar.vert :deep(.sep)::before { width: 21px; height: 2px; background: linear-gradient(#a0a0a0 50%, #fff 50%); }
.bar.vert :deep(.more) { height: 12px; }
.bar.vert :deep(.more)::before { left: 8px; bottom: 3px; border: 3px solid transparent; border-left: 4px solid #000; border-right: 0; }

.low, .low .bar { height: 26px; }
.coords { display: flex; height: 30px; flex: none; }
.coords .bar { height: 30px; padding: 0 18px 0 8px; }
.open { width: 12px; }
.mark-txt { width: 17px; text-align: center; }
.mid { width: 30px; display: flex; justify-content: space-between; padding: 0 6px; }
.mid b { font-weight: 400; }
.status { display: flex; align-items: center; height: 22px; border-bottom: 2px solid #1c3340; padding: 1px 0 0 3px; gap: 2px; font: 11px/16px "Open Sans", sans-serif; flex: none; }
.msg { flex: 1; }
.cell { height: 18px; padding: 0 8px 0 4px; border: 1px solid; border-color: #a0a0a0 #fff #fff #a0a0a0; }
.cell.last { min-width: 51px; padding-right: 4px; }
</style>
